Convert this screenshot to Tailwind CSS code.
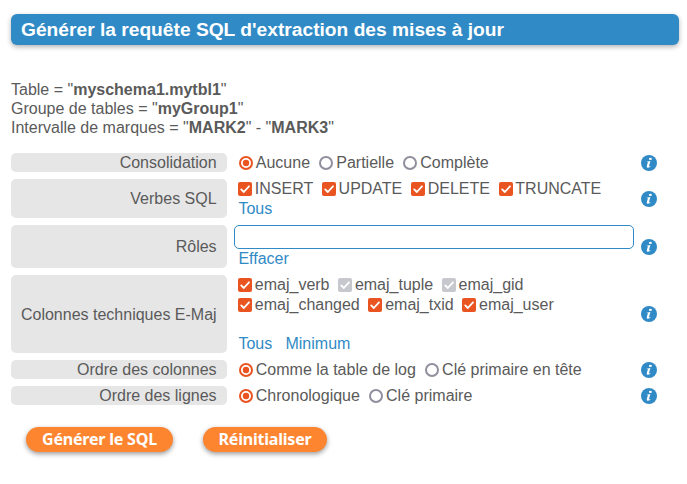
<!DOCTYPE html>
<html lang="fr">
<head>
<meta charset="utf-8">
<title>Générer la requête SQL</title>
<script src="https://cdn.jsdelivr.net/npm/@tailwindcss/browser@4"></script>
</head>
<body class="bg-white text-[#5a5a5a] text-[16px] leading-[19px] font-['Liberation_Sans',Arial,sans-serif]">
<svg class="hidden">
  <symbol id="on" viewBox="0 0 14 14"><circle cx="7" cy="7" r="6" fill="#fff" stroke="#e95420" stroke-width="2"/><circle cx="7" cy="7" r="3.2" fill="#e95420"/></symbol>
  <symbol id="off" viewBox="0 0 14 14"><circle cx="7" cy="7" r="6" fill="#fff" stroke="#8f8f9d" stroke-width="2"/></symbol>
  <symbol id="chk" viewBox="0 0 14 14"><rect width="14" height="14" rx="2" fill="currentColor"/><path d="M3.2 7.4 L5.8 10 L11 4.3" fill="none" stroke="#fff" stroke-width="1.8" stroke-linecap="round" stroke-linejoin="round"/></symbol>
  <symbol id="info" viewBox="0 0 16 16"><circle cx="8" cy="8" r="8" fill="#308ac6"/><ellipse cx="9.4" cy="3.9" rx="1.5" ry="1.1" fill="#fff"/><path d="M5.4 6.7 L9.4 6.1 L8 11 Q8.3 11.9 10.2 10.8 Q8.6 13 6.6 12.8 Q5.4 12.4 5.8 11 L6.9 7.3 Z" fill="#fff"/></symbol>
</svg>
<main class="min-h-screen pt-[14px] pl-[11px] w-[679px]">
  <h1 class="h-[31px] rounded-[6px] bg-[#308ac6] pl-[10px] text-white text-[19.2px] font-bold leading-[31px] whitespace-nowrap shadow-[0_2px_5px_rgba(0,0,0,0.3)]">Générer la requête SQL d'extraction des mises à jour</h1>
  <div class="mt-[35px]">
    <p>Table = "<b>myschema1.mytbl1</b>"</p>
    <p>Groupe de tables = "<b>myGroup1</b>"</p>
    <p>Intervalle de marques = "<b>MARK2</b>" - "<b>MARK3</b>"</p>
  </div>
  <div class="mt-[16px] grid grid-cols-[216px_400px_16px] gap-[7px] grid-rows-[19px_39px_43px_78px_19px_19px] whitespace-nowrap">
    <div class="rounded-[5px] bg-[#e6e6e6] pr-[10.4px] text-right">Consolidation</div>
    <div class="flex pl-[5px] gap-[9.4px]">
      <label class="flex gap-[2.8px]"><svg class="size-[14px] mt-[3px]"><use href="#on"/></svg>Aucune</label>
      <label class="flex gap-[2.8px]"><svg class="size-[14px] mt-[3px]"><use href="#off"/></svg>Partielle</label>
      <label class="flex gap-[2.8px]"><svg class="size-[14px] mt-[3px]"><use href="#off"/></svg>Complète</label>
    </div>
    <svg class="size-4 mt-[2px]"><use href="#info"/></svg>

    <div class="rounded-[5px] bg-[#e6e6e6] pr-[10.4px] pt-[10px] text-right">Verbes SQL</div>
    <div class="pl-[4px]">
      <div class="flex gap-[8.6px] h-5 leading-5">
        <label class="flex gap-[2.8px]"><svg class="size-[14px] mt-[3px] text-[#e95420]"><use href="#chk"/></svg>INSERT</label>
        <label class="flex gap-[2.8px]"><svg class="size-[14px] mt-[3px] text-[#e95420]"><use href="#chk"/></svg>UPDATE</label>
        <label class="flex gap-[2.8px]"><svg class="size-[14px] mt-[3px] text-[#e95420]"><use href="#chk"/></svg>DELETE</label>
        <label class="flex gap-[2.8px]"><svg class="size-[14px] mt-[3px] text-[#e95420]"><use href="#chk"/></svg>TRUNCATE</label>
      </div>
      <a class="block pl-[0.4px] text-[#308ac6]">Tous</a>
    </div>
    <svg class="size-4 mt-[12px]"><use href="#info"/></svg>

    <div class="rounded-[5px] bg-[#e6e6e6] pr-[10.4px] pt-[12px] text-right">Rôles</div>
    <div>
      <div class="h-6 rounded-[5px] border border-[#308ac6] bg-white"></div>
      <a class="block pl-[4.4px] text-[#308ac6]">Effacer</a>
    </div>
    <svg class="size-4 mt-[14px]"><use href="#info"/></svg>

    <div class="rounded-[5px] bg-[#e6e6e6] pr-[10.4px] pt-[30px] text-right">Colonnes techniques E-Maj</div>
    <div class="pl-[4px]">
      <div class="flex gap-[8.6px] h-5 leading-5">
        <label class="flex gap-[2.8px]"><svg class="size-[14px] mt-[3px] text-[#e95420]"><use href="#chk"/></svg>emaj_verb</label>
        <label class="flex gap-[2.8px]"><svg class="size-[14px] mt-[3px] text-[#c7c7ce]"><use href="#chk"/></svg>emaj_tuple</label>
        <label class="flex gap-[2.8px]"><svg class="size-[14px] mt-[3px] text-[#c7c7ce]"><use href="#chk"/></svg>emaj_gid</label>
      </div>
      <div class="flex gap-[8.6px] h-5 leading-5">
        <label class="flex gap-[2.8px]"><svg class="size-[14px] mt-[3px] text-[#e95420]"><use href="#chk"/></svg>emaj_changed</label>
        <label class="flex gap-[2.8px]"><svg class="size-[14px] mt-[3px] text-[#e95420]"><use href="#chk"/></svg>emaj_txid</label>
        <label class="flex gap-[2.8px]"><svg class="size-[14px] mt-[3px] text-[#e95420]"><use href="#chk"/></svg>emaj_user</label>
      </div>
      <div class="mt-[19px] pl-[0.4px] flex gap-[13.3px] text-[#308ac6]"><a>Tous</a><a>Minimum</a></div>
    </div>
    <svg class="size-4 mt-[31px]"><use href="#info"/></svg>

    <div class="rounded-[5px] bg-[#e6e6e6] pr-[10.4px] text-right">Ordre des colonnes</div>
    <div class="flex pl-[5px] gap-[9.4px]">
      <label class="flex gap-[2.8px]"><svg class="size-[14px] mt-[3px]"><use href="#on"/></svg>Comme la table de log</label>
      <label class="flex gap-[2.8px]"><svg class="size-[14px] mt-[3px]"><use href="#off"/></svg>Clé primaire en tête</label>
    </div>
    <svg class="size-4 mt-[2px]"><use href="#info"/></svg>

    <div class="rounded-[5px] bg-[#e6e6e6] pr-[10.4px] text-right">Ordre des lignes</div>
    <div class="flex pl-[5px] gap-[9.4px]">
      <label class="flex gap-[2.8px]"><svg class="size-[14px] mt-[3px]"><use href="#on"/></svg>Chronologique</label>
      <label class="flex gap-[2.8px]"><svg class="size-[14px] mt-[3px]"><use href="#off"/></svg>Clé primaire</label>
    </div>
    <svg class="size-4 mt-[2px]"><use href="#info"/></svg>
  </div>
  <div class="mt-[22px] ml-[15px] flex gap-[30px] font-['Noto_Sans',sans-serif] font-bold text-[16px] tracking-[-0.2px] leading-[25px] text-white whitespace-nowrap">
    <button class="w-[147px] h-[25px] rounded-full bg-[#fd8530] shadow-[0_2px_5px_rgba(0,0,0,0.4)]">Générer le SQL</button>
    <button class="w-[124px] h-[25px] rounded-full bg-[#fd8530] shadow-[0_2px_5px_rgba(0,0,0,0.4)]">Réinitialiser</button>
  </div>
</main>
</body>
</html>
